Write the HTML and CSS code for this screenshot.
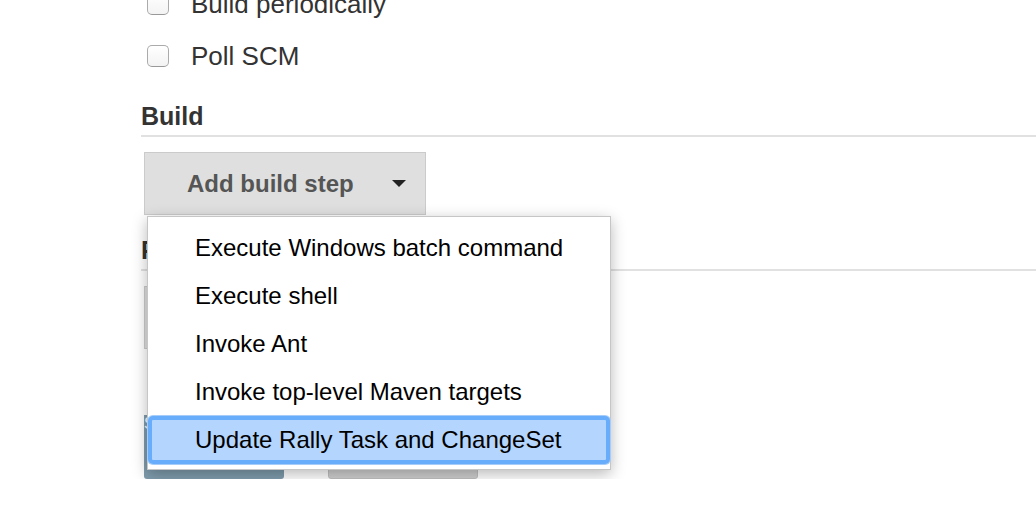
FILE: index.html
```html
<!DOCTYPE html>
<html>
<head>
<meta charset="utf-8">
<link rel="stylesheet" href="styles.css">
</head>
<body>
<div class="page">
  <div class="check-row"><span class="checkbox"></span><span>Build periodically</span></div>
  <div class="check-row"><span class="checkbox"></span><span>Poll SCM</span></div>

  <div class="section-title">Build</div>
  <div class="btn-wrap">
    <div class="btn"><span>Add build step</span><span class="caret"></span></div>
    <ul class="menu">
      <li class="item">Execute Windows batch command</li>
      <li class="item">Execute shell</li>
      <li class="item">Invoke Ant</li>
      <li class="item">Invoke top-level Maven targets</li>
      <li class="item active">Update Rally Task and ChangeSet</li>
    </ul>
  </div>

  <div class="section-title second">Post-build Actions</div>
  <div class="btn-wrap">
    <div class="btn"><span>Add post-build action</span><span class="caret"></span></div>
  </div>

  <div class="actions">
    <div class="save">Save</div>
    <div class="apply">Apply</div>
  </div>
</div>
</body>
</html>
```

FILE: styles.css
```css
html, body {
  margin: 0;
  padding: 0;
  background: #fff;
  overflow: hidden;
}
body {
  font-family: "Liberation Sans", Arial, sans-serif;
  color: #333;
}
.page {
  margin-top: -22px;
  padding-left: 141px;
}
.check-row {
  display: flex;
  align-items: center;
  height: 52px;
  padding-left: 6px;
  gap: 22px;
  font-size: 26px;
  color: #333;
}
.checkbox {
  width: 22px;
  height: 22px;
  box-sizing: border-box;
  border: 1px solid #ababab;
  border-bottom-color: #999;
  border-radius: 5px;
  background: linear-gradient(#fff, #f3f3f3);
  flex: none;
}
.section-title {
  margin-top: 19px;
  font-size: 25px;
  font-weight: bold;
  line-height: 30px;
  padding-bottom: 4px;
  border-bottom: 2px solid #e1e1e1;
  color: #333;
}
.section-title.second {
  margin-top: 20px;
}
.btn-wrap {
  position: relative;
  width: fit-content;
  margin: 15px 0 0 3px;
}
.btn {
  display: flex;
  align-items: center;
  justify-content: space-between;
  box-sizing: border-box;
  width: 282px;
  height: 63px;
  padding: 0 19px 0 42px;
  background: #dfdfdf;
  border: 1px solid #cbcbcb;
  font-size: 24px;
  font-weight: bold;
  color: #555;
}
.caret {
  width: 0;
  height: 0;
  border-left: 7px solid transparent;
  border-right: 7px solid transparent;
  border-top: 7px solid #222;
}
.menu {
  position: absolute;
  left: 3px;
  top: calc(100% + 1px);
  z-index: 10;
  width: 464px;
  box-sizing: border-box;
  margin: 0;
  padding: 7px 0 5px;
  list-style: none;
  background: #fff;
  border: 1px solid #c6c6c6;
  box-shadow: 0 4px 14px rgba(0, 0, 0, 0.28);
}
.item {
  height: 48px;
  line-height: 48px;
  padding-left: 47px;
  font-size: 24px;
  color: #000;
  white-space: nowrap;
}
.item.active {
  background: #b4d5fd;
  border-radius: 5px;
  box-shadow: inset 0 0 0 4px #68adfb, 0 0 0 1px #a6cdfa;
}
.actions {
  display: flex;
  gap: 44px;
  margin: 66px 0 0 3px;
}
.save {
  width: 140px;
  height: 64px;
  background: #7f9cad;
  border-radius: 0 0 3px 3px;
  color: #fff;
}
.apply {
  width: 150px;
  height: 64px;
  box-sizing: border-box;
  background: #cfcfcf;
  border: 1px solid #c0c0c0;
  border-radius: 3px;
  color: #333;
}
```
